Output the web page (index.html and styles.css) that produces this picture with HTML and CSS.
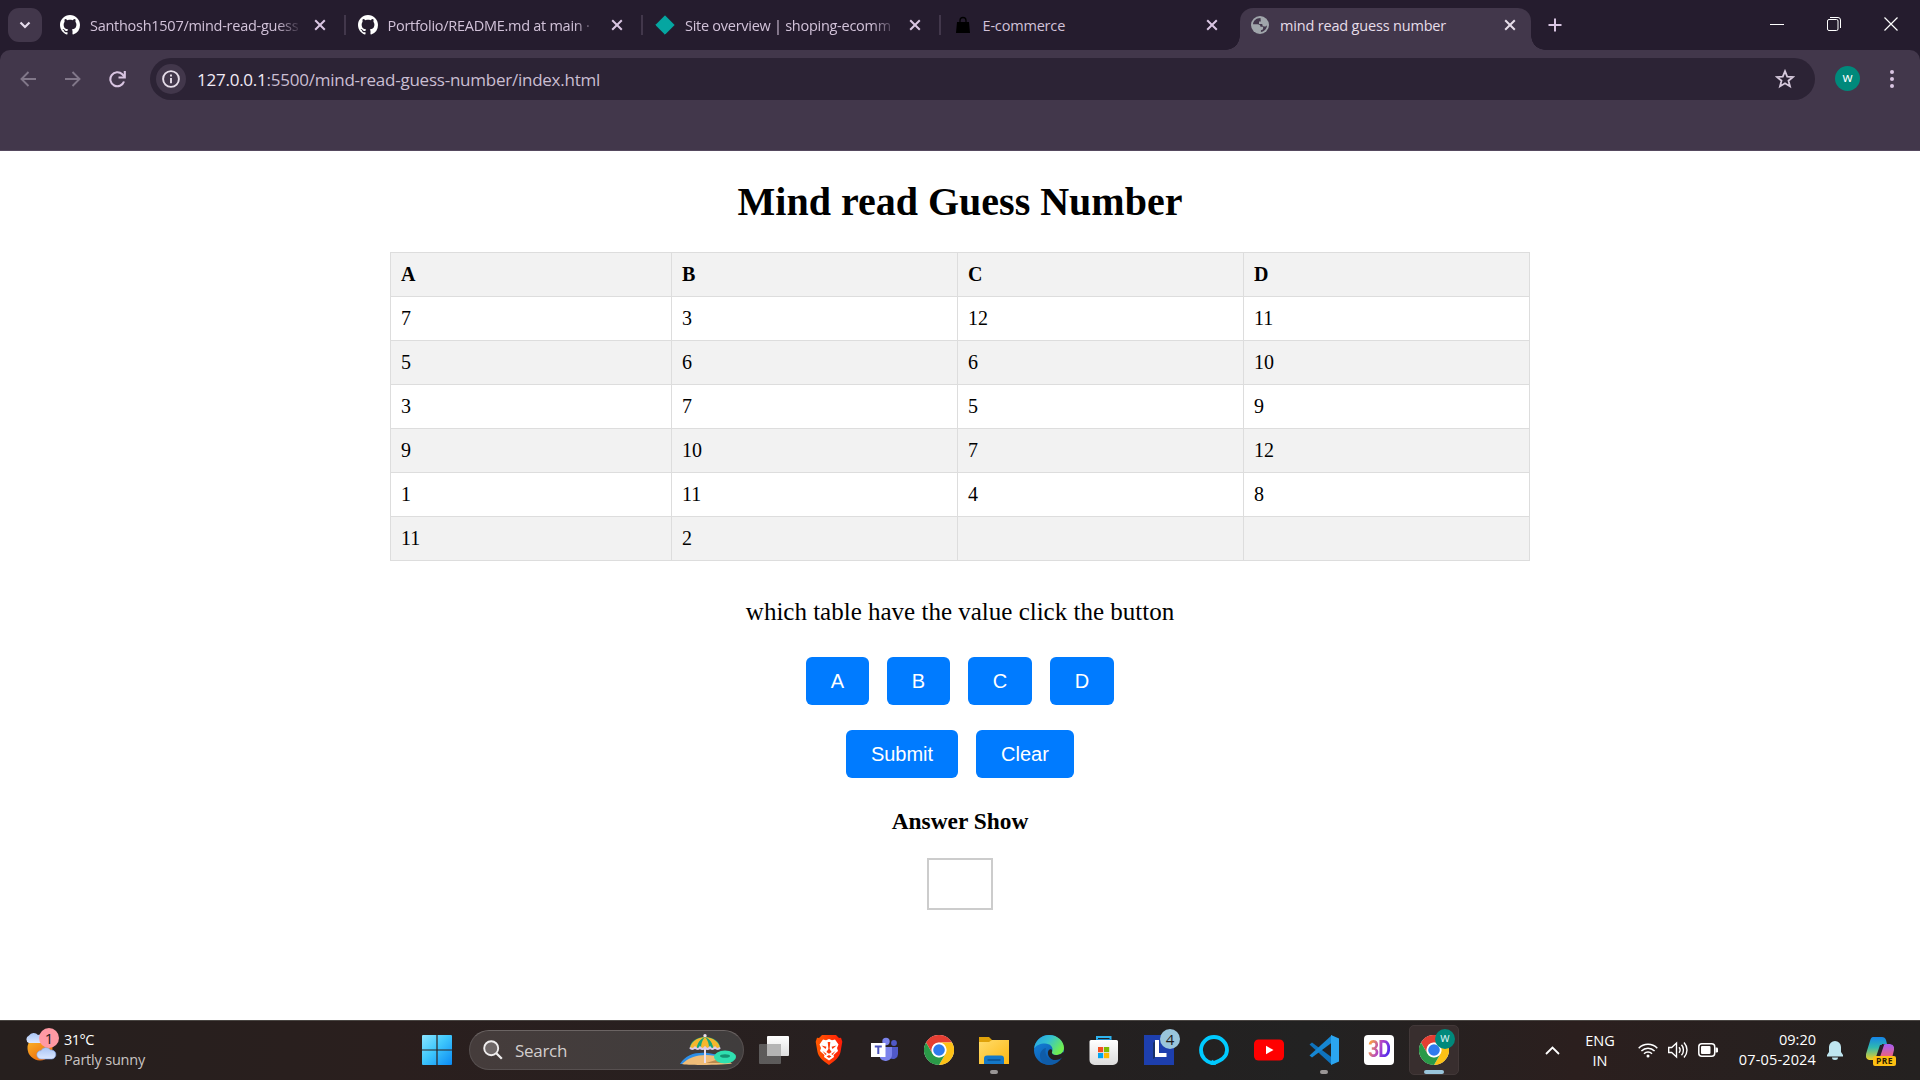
FILE: index.html
```html
<!DOCTYPE html>
<html lang="en">
<head>
<meta charset="utf-8">
<title>mind read guess number</title>
<link rel="stylesheet" href="styles.css">
</head>
<body>
<svg width="0" height="0" class="defs" aria-hidden="true">
  <defs>
    <linearGradient id="win" x1="0" y1="0" x2="1" y2="1"><stop offset="0" stop-color="#8be4ff"/><stop offset=".45" stop-color="#40c8fc"/><stop offset="1" stop-color="#0a8af4"/></linearGradient>
    <linearGradient id="sun" x1="0" y1="0" x2=".6" y2="1"><stop offset="0" stop-color="#fbc02d"/><stop offset="1" stop-color="#ef6c0c"/></linearGradient>
    <linearGradient id="cloud" x1="0" y1="0" x2="0" y2="1"><stop offset="0" stop-color="#a9c4f5"/><stop offset="1" stop-color="#dbe7ff"/></linearGradient>
    <linearGradient id="brave" x1="0" y1="0" x2="1" y2="0"><stop offset="0" stop-color="#ff5a00"/><stop offset="1" stop-color="#ff1c08"/></linearGradient>
    <linearGradient id="folder" x1="0" y1="0" x2="1" y2="1"><stop offset="0" stop-color="#ffdc6b"/><stop offset="1" stop-color="#fdb813"/></linearGradient>
    <linearGradient id="edgeTop" x1="0" y1="0" x2="1" y2=".5"><stop offset="0" stop-color="#249ee8"/><stop offset=".5" stop-color="#35c2d0"/><stop offset="1" stop-color="#70ee50"/></linearGradient>
    <linearGradient id="edgeLow" x1="0" y1="0" x2=".7" y2="1"><stop offset="0" stop-color="#1587e0"/><stop offset="1" stop-color="#0c55a8"/></linearGradient>
    <linearGradient id="store" x1="0" y1="0" x2="0" y2="1"><stop offset="0" stop-color="#fff"/><stop offset="1" stop-color="#dcdcdc"/></linearGradient>
    <linearGradient id="paper" x1="0" y1="0" x2="0" y2="1"><stop offset="0" stop-color="#fff"/><stop offset="1" stop-color="#dedede"/></linearGradient>
    <linearGradient id="copA" x1="0" y1="0" x2="0" y2="1"><stop offset="0" stop-color="#1584e8"/><stop offset=".45" stop-color="#2fb8b0"/><stop offset="1" stop-color="#f2cf20"/></linearGradient>
    <linearGradient id="copB" x1="0" y1="0" x2="0" y2="1"><stop offset="0" stop-color="#a35df5"/><stop offset="1" stop-color="#f7626f"/></linearGradient>
    <symbol id="github" viewBox="0 0 16 16"><path fill="#fff" d="M8 0C3.58 0 0 3.58 0 8c0 3.54 2.29 6.53 5.47 7.59.4.07.55-.17.55-.38 0-.19-.01-.82-.01-1.49-2.01.37-2.53-.49-2.69-.94-.09-.23-.48-.94-.82-1.13-.28-.15-.68-.52-.01-.53.63-.01 1.08.58 1.23.82.72 1.21 1.87.87 2.33.66.07-.52.28-.87.51-1.07-1.78-.2-3.64-.89-3.64-3.95 0-.87.31-1.59.82-2.15-.08-.2-.36-1.02.08-2.12 0 0 .67-.21 2.2.82.64-.18 1.32-.27 2-.27s1.36.09 2 .27c1.53-1.04 2.2-.82 2.2-.82.44 1.1.16 1.92.08 2.12.51.56.82 1.27.82 2.15 0 3.07-1.87 3.75-3.65 3.95.29.25.54.73.54 1.48 0 1.07-.01 1.93-.01 2.2 0 .21.15.46.55.38A8.01 8.01 0 0 0 16 8c0-4.42-3.58-8-8-8z"/></symbol>
    <symbol id="cross" viewBox="0 0 12 12"><path d="M1.2 1.2l9.6 9.6M10.800 1.200l-9.600 9.600" stroke="currentColor" stroke-width="2" fill="none"/></symbol>
    <symbol id="chrome" viewBox="0 0 48 48"><circle cx="24" cy="24" r="24" fill="#fff"/><path fill="#e53e32" d="M3.200 12A24 24 0 0 1 44.800 12H24a12 12 0 0 0-10.400 18z"/><path fill="#fdc116" d="M44.800 12A24 24 0 0 1 24 48l10.400-18A12 12 0 0 0 24 12z"/><path fill="#2a9a48" d="M24 48A24 24 0 0 1 3.200 12l10.400 18A12 12 0 0 0 34.400 30z"/><circle cx="24" cy="24" r="11.500" fill="#fff"/><circle cx="24" cy="24" r="9.300" fill="#2f7bee"/></symbol>
  </defs>
</svg>

<div class="window">
  <header class="tabstrip">
    <div class="tab-search"><svg width="12" height="8" viewBox="0 0 12 8"><path d="M1.500 1.500L6 6l4.500-4.500" fill="none" stroke="#e6dcec" stroke-width="2.200"/></svg></div>
    <div class="tab"><svg class="favicon" width="20" height="20"><use href="#github"/></svg><span class="title">Santhosh1507/mind-read-guess</span><svg class="close" width="12" height="12"><use href="#cross"/></svg></div>
    <div class="tab sep"><svg class="favicon" width="20" height="20"><use href="#github"/></svg><span class="title">Portfolio/README.md at main ·</span><svg class="close" width="12" height="12"><use href="#cross"/></svg></div>
    <div class="tab sep"><svg class="favicon" width="20" height="20" viewBox="0 0 20 20"><path d="M10 .8L19.200 10 10 19.200.800 10z" fill="#05a6a1" stroke="#05a6a1" stroke-width="1" stroke-linejoin="round"/></svg><span class="title">Site overview | shoping-ecomm</span><svg class="close" width="12" height="12"><use href="#cross"/></svg></div>
    <div class="tab sep"><svg class="favicon" width="20" height="20" viewBox="0 0 20 20"><path d="M4 7h12l1 11H3z" fill="#000"/><path d="M7 10V5.500a3 3 0 0 1 6 0V10" fill="none" stroke="#000" stroke-width="1.300"/></svg><span class="title plain">E-commerce</span><svg class="close" width="12" height="12"><use href="#cross"/></svg></div>
    <div class="tab active"><svg class="favicon" width="18" height="18" viewBox="0 0 18 18"><circle cx="9" cy="9" r="9" fill="#a0a6ab"/><path d="M9.500 2C5 2 2.200 5 2 8.200h4.500c2 0 3 1 3 2.600h2.600v1.800c0 1-1 1.600-2.200 1.600v1.700c3.500-.4 6-3.300 6.100-6.700-.6 1-1.600 1.500-2.800 1.300-1.500-.2-1.900-1.200-1.900-2.500H8V5.500h1.800z" fill="#42374b"/></svg><span class="title plain">mind read guess number</span><svg class="close" width="12" height="12"><use href="#cross"/></svg></div>
    <div class="new-tab"><svg width="14" height="14" viewBox="0 0 14 14"><path d="M7 .5v13M.5 7h13" stroke="#d9c5e2" stroke-width="2"/></svg></div>
    <div class="controls">
      <svg width="14" height="14" viewBox="0 0 14 14"><path d="M0 7.500h14" stroke="#fff"/></svg>
      <svg width="14" height="14" viewBox="0 0 14 14" fill="none" stroke="#fff"><rect x=".5" y="2.500" width="10.500" height="11" rx="1.500"/><path d="M3 .5h8a2.500 2.500 0 0 1 2.500 2.500v8"/></svg>
      <svg width="14" height="14" viewBox="0 0 14 14"><path d="M.5.5l13 13M13.500.5l-13 13" stroke="#fff" stroke-width="1.200"/></svg>
    </div>
  </header>

  <div class="toolbar-back"><div class="toolbar">
    <div class="nav">
      <svg width="16" height="16" viewBox="0 0 16 16" fill="none" stroke="#817789" stroke-width="1.900"><path d="M16 8H1.500M8.500 1L1.500 8l7 7"/></svg>
      <svg width="16" height="16" viewBox="0 0 16 16" fill="none" stroke="#817789" stroke-width="1.900"><path d="M0 8h14.500M7.500 1l7 7-7 7"/></svg>
      <svg width="17" height="17" viewBox="0 0 17 17" fill="none" stroke="#d9c5e2" stroke-width="2.100"><path d="M15 10.500A7 7 0 1 1 13.300 3.300L15.300 5.500"/><path d="M15.800 0v6.500H9.500"/></svg>
    </div>
    <div class="omnibox">
      <div class="info"><svg width="18" height="18" viewBox="0 0 18 18"><circle cx="9" cy="9" r="7.900" fill="none" stroke="#e6dde9" stroke-width="1.900"/><path d="M9 8v5.200M9 4.600v2" stroke="#e6dde9" stroke-width="1.900"/></svg></div>
      <div class="url"><b>127.0.0.1</b>:5500/mind-read-guess-number/index.html</div>
      <svg class="star" width="20" height="20" viewBox="0 0 20 20"><path d="M10 2.200l2.200 5.400 5.800.4-4.500 3.700 1.500 5.700L10 14.300l-5 3.100 1.500-5.700L2 8l5.800-.4z" fill="none" stroke="#d6c9dc" stroke-width="1.800"/></svg>
    </div>
    <div class="avatar">w</div>
    <svg class="dots" width="4" height="18" viewBox="0 0 4 18" fill="#d9c5e2"><circle cx="2" cy="2" r="2"/><circle cx="2" cy="9" r="2"/><circle cx="2" cy="16" r="2"/></svg>
  </div></div>

  <main class="page">
    <h1>Mind read Guess Number</h1>
    <table>
      <tr><th>A</th><th>B</th><th>C</th><th>D</th></tr>
      <tr><td>7</td><td>3</td><td>12</td><td>11</td></tr>
      <tr><td>5</td><td>6</td><td>6</td><td>10</td></tr>
      <tr><td>3</td><td>7</td><td>5</td><td>9</td></tr>
      <tr><td>9</td><td>10</td><td>7</td><td>12</td></tr>
      <tr><td>1</td><td>11</td><td>4</td><td>8</td></tr>
      <tr><td>11</td><td>2</td><td></td><td></td></tr>
    </table>
    <p class="question">which table have the value click the button</p>
    <div class="buttons letters"><button>A</button><button>B</button><button class="wide">C</button><button class="wide">D</button></div>
    <div class="buttons actions"><button class="submit">Submit</button><button class="clear">Clear</button></div>
    <h3>Answer Show</h3>
    <div class="answer"></div>
  </main>

  <footer class="taskbar">
    <div class="weather">
      <div class="weather-icon">
        <svg width="32" height="30" viewBox="0 0 32 30"><circle cx="15" cy="16" r="12.500" fill="url(#sun)"/><path d="M4 11a4 4 0 0 1 0-7.500A5.500 5.500 0 0 1 13 3a4 4 0 0 1 4 8z" fill="url(#cloud)"/><path d="M16 27a4.200 4.200 0 0 1 0-8.400 5.500 5.500 0 0 1 9.600-.6 4.500 4.500 0 0 1 1.400 9z" fill="url(#cloud)" stroke="#7f9fe0" stroke-width=".6"/></svg>
        <span class="badge pink">1</span>
      </div>
      <div class="weather-text"><span class="temp">31°C</span><span class="cond">Partly sunny</span></div>
    </div>
    <div class="apps">
      <div class="app start"><svg width="30" height="30" viewBox="0 0 30 30"><path d="M0 1a1 1 0 0 1 1-1h13.400v14.400H0zM15.600 0H29a1 1 0 0 1 1 1v13.400H15.600zM0 15.600h14.400V30H1a1 1 0 0 1-1-1zM15.600 15.600H30V29a1 1 0 0 1-1 1H15.600z" fill="url(#win)"/></svg></div>
      <div class="search">
        <svg width="20" height="20" viewBox="0 0 20 20"><circle cx="8.200" cy="8.200" r="7" fill="#6e6767" stroke="#f0eeee" stroke-width="1.900"/><path d="M13.300 13.300l5.500 5.500" stroke="#f0eeee" stroke-width="2.300"/></svg>
        <span>Search</span>
        <svg class="beach" width="56" height="32" viewBox="0 0 56 32">
          <path d="M0 30C6 20 16 18 28 19l16 3-2 8z" fill="#2d8fe8"/><path d="M2 30c6-6 14-9 24-9 12 0 20 4 26 8.500-4 1.500-46 2-50 .5z" fill="#f0bd78"/>
          <path d="M26 29l10-3h10l-4 3z" fill="#b98a50"/>
          <path d="M25 3v26" stroke="#e9dff0" stroke-width="2"/><circle cx="25" cy="1.700" r="1.700" fill="#e8e0ec"/>
          <path d="M10 14C10 7 17 3 25 3s15 4 15 11z" fill="#14a67b"/><path d="M10 14c1-6 6-10 15-11-5 3-7 6-8 11zM33 14c-1-5-3-8-8-11 9 1 14 5 15 11zM20 14c0-5 2-9 5-11 3 2 5 6 5 11z" fill="#f4b72d"/><path d="M17 14c0-4 3-9 8-11-3 3-4 7-4 11zM29 14c0-4-1-8-4-11 5 2 8 7 8 11z" fill="#14a67b"/>
          <path d="M10 13.500q2 3 5 0 3 3 5 0 2.500 3 5 0 2.500 3 5 0 2 3 5 0 3 3 5 0" fill="none" stroke="#d9ccec" stroke-width="2.200"/>
          <ellipse cx="45" cy="23" rx="11" ry="6.500" fill="#2fe0b0"/><ellipse cx="45" cy="22" rx="5" ry="1.800" fill="#149372"/>
        </svg>
      </div>
      <div class="app"><svg width="30" height="30" viewBox="0 0 30 30"><rect x="8" y="1" width="22" height="20" rx="1" fill="url(#paper)"/><rect x="0" y="9" width="22" height="20" rx="1" fill="#727272" opacity=".72"/><path d="M8 9h14v12H8z" fill="#b4b4b4"/></svg></div>
      <div class="app"><svg width="30" height="30" viewBox="0 0 30 30"><path d="M8 0h14l3 3 2-.3 1.300 4L26.500 17c-1 5-5 8.500-11.500 13C8.500 25.500 4.500 22 3.500 17L1.700 6.700 3 2.700 5 3z" fill="url(#brave)"/><path d="M9 4.500l3 .8L15 4l3 1.300 3-.8 3.500 5-1.500 3.500 1 3-4.500 4L20 22l-5 3.500L10 22l.5-2L6 16l1-3-1.500-3.500z" fill="#fff"/><path d="M7.500 10.500l5 1.300-1 2.200zM22.500 10.500l-5 1.300 1 2.200zM13.700 7h2.600l-.7 7 2 3-2.600 1.700-2.600-1.700 2-3zM8.500 16l4.200 3-1.200 1zM21.500 16l-4.200 3 1.200 1zM12.500 21.500L15 20l2.500 1.500L15 23z" fill="#fb3b0b"/></svg></div>
      <div class="app"><svg width="28" height="30" viewBox="0 0 28 30"><circle cx="24" cy="8" r="2.900" fill="#5059c9"/><circle cx="16" cy="6.500" r="3.700" fill="#7b83eb"/><path d="M18 12h10v7a5 5 0 0 1-8 4z" fill="#5059c9"/><path d="M10 12h12v8a6.500 6.500 0 0 1-12 3z" fill="#7b83eb"/><rect x="1" y="8" width="14.500" height="14" fill="#fff"/><path d="M4.800 11.500h7M8.300 11.500v7.500" stroke="#4b53bc" stroke-width="2"/></svg></div>
      <div class="app"><svg width="30" height="30"><use href="#chrome"/></svg></div>
      <div class="app run"><svg width="30" height="30" viewBox="0 0 30 30"><path d="M0 2h10l3 3v5H0z" fill="#dfa20a"/><path d="M0 7h10l3-2h17v24H0z" fill="url(#folder)"/><path d="M5 29v-5.500a3 3 0 0 1 3-3h14a3 3 0 0 1 3 3V29z" fill="#1478c8"/><path d="M8.500 25h13" stroke="#0a4d8c" stroke-width="1.400"/></svg></div>
      <div class="app"><svg width="30" height="30" viewBox="0 0 30 30"><circle cx="15" cy="15" r="15" fill="url(#edgeLow)"/><path d="M.2 13.500C1 5.500 7.500 0 15 0c9 0 15 6.500 15 13 0 5-4 7-7.500 7-3.500 0-5-1.500-4.500-3 2-5-2-8.500-7-8.500C6 8.500 2 10.500.2 13.500z" fill="url(#edgeTop)"/><path d="M12 13c-2 5.500 1.500 13 9 12 3-.4 5-1.500 7-3.200C25 27 20.500 30 15 30c-5 0-9.500-5-9-10 .3-3.500 3-6.500 6-7z" fill="#0f5ca8"/><path d="M18 17c-.5 2 1 3 4.500 3 3 0 5-1 6.500-3l1.500 1-1.700 4c-2 2-4.800 3-7.300 3-6 0-9-6-7-9.500 1.500-2 4.300-2 3.500 1.500z" fill="#242020"/></svg></div>
      <div class="app"><svg width="30" height="30" viewBox="0 0 30 30"><path d="M8 7V2h13.500v5" fill="none" stroke="#2fb4ef" stroke-width="2"/><path d="M.5 6.500a1.500 1.500 0 0 1 1.500-1.500h25.500A1.500 1.500 0 0 1 29 6.500V25a5 5 0 0 1-5 5H5.500a5 5 0 0 1-5-5z" fill="url(#store)"/><path d="M7.500 4.500h14.500" stroke="#188ccc" stroke-width="1"/><path d="M9 12h5.200v5.200H9z" fill="#f25022"/><path d="M15 12h5.200v5.200H15z" fill="#7fba00"/><path d="M9 18h5.200v5.200H9z" fill="#00a4ef"/><path d="M15 18h5.200v5.200H15z" fill="#ffb900"/></svg></div>
      <div class="app"><svg width="30" height="30" viewBox="0 0 30 30"><path d="M0 0h30v30H0z" fill="#1d3fae"/><path d="M11 6v17l-2 1V8zM11 23h12" fill="#153067"/><path d="M11 5h4v13h7.500v4H11z" fill="#fff"/></svg><span class="badge blue">4</span></div>
      <div class="app"><svg width="30" height="30" viewBox="0 0 30 30"><path d="M14 28.300C7.500 27.800 2 22 2 15A13 13 0 1 1 28 15c0 6-5 10.500-14 13.300z" fill="none" stroke="#00caff" stroke-width="3.800" stroke-linejoin="round"/><path d="M12 26l1 4 4-.1-3-5.200z" fill="#00caff"/></svg></div>
      <div class="app"><svg width="30" height="30" viewBox="0 0 30 30"><rect y="4.500" width="30" height="21" rx="4.500" fill="#f00"/><path d="M12 10.700v8.600l7.500-4.300z" fill="#fff"/></svg></div>
      <div class="app run"><svg width="30" height="30" viewBox="0 0 30 30"><path d="M.5 9.500L3 7.500l20 15V30z" fill="#0f73bd"/><path d="M.5 20.500L3 22.500l20-15V0z" fill="#1687d3"/><path d="M22 0l8 3.500v23L22 30V0z" fill="#2ba5f0"/></svg></div>
      <div class="app"><div class="three-d"><span>3D</span></div></div>
      <div class="app current"><svg width="30" height="30"><use href="#chrome"/></svg><span class="badge green">w</span></div>
    </div>
    <div class="tray">
      <svg class="up" width="15" height="9" viewBox="0 0 15 9"><path d="M1 8l6.500-6.500L14 8" fill="none" stroke="#fff" stroke-width="1.800"/></svg>
      <div class="lang"><span>ENG</span><span>IN</span></div>
      <div class="status">
        <svg width="20" height="16" viewBox="0 0 20 16" fill="none" stroke="#fff" stroke-width="1.500"><path d="M.7 6.200a13 13 0 0 1 18.600 0M3.400 9a9.300 9.300 0 0 1 13.200 0M6 11.700a5.700 5.700 0 0 1 8 0"/><circle cx="10" cy="14" r="1.500" fill="#fff" stroke="none"/></svg>
        <svg width="20" height="18" viewBox="0 0 20 18" fill="none" stroke="#fff" stroke-width="1.400"><path d="M.7 6.500h3L8.500 2v14l-4.800-4.500h-3z"/><path d="M11 6.200c1.300 1.600 1.300 4 0 5.600M13.500 3.800c2.600 3 2.600 7.400 0 10.400M16 1.500c4 4.500 4 10.500 0 15"/></svg>
        <svg width="20" height="14" viewBox="0 0 20 14"><rect x=".8" y=".8" width="15.900" height="12.400" rx="3" fill="none" stroke="#fff" stroke-width="1.500"/><rect x="3" y="3" width="9.500" height="8" rx="1" fill="#fff"/><path d="M17.500 4.500h1.200q1.300 0 1.300 1.300v2.400q0 1.300-1.300 1.300h-1.200z" fill="#fff"/></svg>
      </div>
      <div class="clock"><span class="time">09:20</span><span class="date">07-05-2024</span></div>
      <svg class="bell" width="16" height="19" viewBox="0 0 16 19" fill="#bfe6f0"><path d="M8 0a6 6 0 0 1 6 6v5l2 3v1.500H0V14l2-3V6a6 6 0 0 1 6-6zM5 16.500h6a3 2.500 0 0 1-6 0z"/></svg>
      <div class="copilot"><svg width="28" height="24" viewBox="0 0 28 24"><path d="M7 0h9q3 0 4 3l1 4h-5l-5 13q-1 3-4 3H3q-4-1-3-6L4 4q1-4 3-4z" fill="url(#copA)"/><path d="M20 7h4q5 1 4 6l-2 8H12l4-11q1-3 4-3z" fill="url(#copB)"/><path d="M14 8h4l-4 12h-4z" fill="#26202a"/></svg><span>PRE</span></div>
    </div>
  </footer>
</div>
</body>
</html>
```

FILE: styles.css
```css
* { box-sizing: border-box; }
body { margin: 0; overflow: hidden; background: #fff; }
svg { display: block; flex: none; }
.defs { position: absolute; }
.window { width: 1920px; height: 1080px; display: flex; flex-direction: column; font-family: "Open Sans", "Noto Sans", sans-serif; }

/* Tab strip */
.tabstrip { height: 50px; flex: none; display: flex; align-items: flex-start; padding: 8px 0 0 8px; background: #251c2e; color: #d2c2d9; }
.tab-search { width: 34px; height: 34px; margin-right: 4px; border-radius: 11px; background: #42374b; display: grid; place-items: center; }
.tab { width: 297.500px; height: 42px; padding: 0 14px 8px 14px; display: flex; align-items: center; }
.tab .favicon { margin-right: 10px; }
.tab .title { flex: 1; white-space: nowrap; font-size: 14.500px; line-height: 24px; padding-top: 2px; letter-spacing: -0.270px; margin-right: 12px; -webkit-mask-image: linear-gradient(90deg, #000 88%, transparent); mask-image: linear-gradient(90deg, #000 88%, transparent); }
.tab .title.plain { -webkit-mask-image: none; mask-image: none; letter-spacing: -0.180px; }
.sep { background: linear-gradient(#42374b, #42374b) -1px 7px / 3px 20px no-repeat; }
.tab .close { margin-right: 4px; color: #d9c5e2; }
.tab.active { position: relative; width: 291px; margin-left: 4px; padding: 0 11px 8px 11px; border-radius: 13px 13px 0 0; background: #42374b; color: #e6dde9; }
.tab.active .favicon { margin-right: 11px; }
.tab.active .close { color: #e6dde9; }
.tab.active::before, .tab.active::after { content: ""; position: absolute; bottom: 0; width: 14px; height: 14px; }
.tab.active::before { left: -14px; background: radial-gradient(circle at 0 0, transparent 13.500px, #42374b 14px); }
.tab.active::after { right: -14px; background: radial-gradient(circle at 100% 0, transparent 13.500px, #42374b 14px); }
.new-tab { padding: 10px 0 0 17px; }
.controls { display: flex; gap: 43px; margin: 9px 22px 0 auto; }

/* Toolbar */
.toolbar-back { flex: none; height: 101px; background: linear-gradient(#251c2e 14px, #42374b 14px); }
.toolbar { height: 101px; padding-top: 8px; display: flex; align-items: flex-start; background: #42374b; border-radius: 10px 10px 0 0; border-bottom: 1px solid #55495e; }
.nav { width: 150px; height: 42px; padding-left: 20px; display: flex; align-items: center; gap: 28.500px; }
.omnibox { width: 1665px; height: 42px; padding: 0 20px 0 6px; border-radius: 21px; background: #2c2335; display: flex; align-items: center; }
.info { width: 30px; height: 30px; border-radius: 50%; background: #42374b; display: grid; place-items: center; margin-right: 11px; }
.url { flex: 1; font-size: 17px; line-height: 26px; padding-top: 1px; letter-spacing: -0.240px; color: #cabed2; }
.url b { font-weight: 400; color: #f2ebf5; }
.avatar { width: 25px; height: 25px; margin: 8px 0 0 20px; border-radius: 50%; background: #00897b; color: #fff; font-size: 13px; line-height: 23px; text-align: center; }
.dots { margin: 12px 0 0 30px; }

/* Page */
.page { flex: 1; display: flex; flex-direction: column; align-items: center; background: #fff; color: #000; font-family: "Liberation Serif", serif; }
h1 { margin: 28px 0 0; font-size: 40px; line-height: 46px; white-space: nowrap; }
table { width: 1140px; margin-top: 27px; border-collapse: collapse; table-layout: fixed; font-size: 20px; }
th, td { height: 44px; border: 1px solid #ddd; padding: 0 10px; text-align: left; line-height: 23px; }
tr:nth-child(odd) { background: #f2f2f2; }
th:first-child { width: 281px; }
.question { margin: 36px 0 0; font-size: 25px; line-height: 30px; white-space: nowrap; }
.buttons { display: flex; gap: 18px; }
.letters { margin-top: 30px; }
.actions { margin-top: 25px; }
button { width: 63px; height: 48px; padding: 0; border: 0; border-radius: 6px; background: #007bff; color: #fff; font: 20px "Liberation Sans", sans-serif; }
button.wide { width: 64px; }
button.submit { width: 112px; }
button.clear { width: 98px; }
h3 { margin: 29px 0 0; font-size: 23.400px; line-height: 28px; white-space: nowrap; }
.answer { width: 66px; height: 52px; margin-top: 23px; border: 2px solid #ccc; }

/* Taskbar */
.taskbar { position: relative; height: 60px; flex: none; display: flex; border-top: 1px solid #494542; background: linear-gradient(90deg, #261f1e, #2a1f1e 20%, #272020 45%, #242020 57%, #222 68%, #2b1f1e 82%, #242120); color: #fff; }
.weather { width: 412px; padding-left: 25px; display: flex; gap: 7px; }
.weather-icon { position: relative; width: 32px; padding-top: 11px; }
.weather-text { display: flex; flex-direction: column; padding-top: 9px; font-size: 14.500px; line-height: 20px; letter-spacing: -0.200px; }
.cond { color: #c9c4c3; }
.temp { letter-spacing: -0.500px; }
.badge { position: absolute; width: 20px; height: 20px; border-radius: 50%; text-align: center; color: #1e1a1a; font-size: 15px; line-height: 20px; }
.pink { left: 14px; top: 7px; background: #ff99a4; }
.blue { right: 4px; top: 4px; background: #99c5db; }
.green { right: 3px; top: 3px; background: #00897b; color: #d5eeee; font-size: 12px; line-height: 18px; }
.apps { display: flex; gap: 5px; padding-top: 4px; }
.app { position: relative; width: 50px; height: 50px; display: grid; place-items: center; border-radius: 5px; }
.start { margin-right: 2px; }
.search { width: 275px; height: 40px; margin-top: 5px; padding-left: 13px; display: flex; align-items: center; gap: 12px; border: 1px solid #575050; border-top-color: #6b6463; border-radius: 20px; background: linear-gradient(90deg, #453c3b, #403d3d); color: #d3cecd; font-size: 17px; letter-spacing: -0.300px; }
.beach { margin-left: auto; margin-right: 7px; }
.run::after, .current::after { content: ""; position: absolute; bottom: 1px; left: 21px; width: 8px; height: 4px; border-radius: 2px; background: #9a9696; }
.current { background: #382e2e; border: 1px solid #423838; }
.current::after { bottom: 0; left: 14px; width: 20px; background: #99c5db; }
.three-d { width: 30px; height: 30px; border-radius: 4px; background: #fff; display: grid; place-items: center; }
.three-d span { font: 700 23px/28px "Roboto", sans-serif; letter-spacing: -1px; transform: scaleX(.85); background: linear-gradient(115deg, #f79b45 15%, #b043c9 50%, #4a2bf0 85%); -webkit-background-clip: text; background-clip: text; color: transparent; }
.tray { margin-left: auto; display: flex; align-items: flex-start; padding-right: 25px; }
.up { margin: 25px 24px 0 0; }
.lang { width: 32px; margin: 10px 22px 0 0; display: flex; flex-direction: column; align-items: center; font-size: 14.500px; line-height: 20px; }
.status { display: flex; align-items: center; gap: 10px; height: 58px; margin-right: 20px; }
.clock { width: 78px; margin: 9px 11px 0 0; display: flex; flex-direction: column; align-items: flex-end; font-size: 14.500px; line-height: 20px; white-space: nowrap; }
.date { letter-spacing: .15px; }
.bell { margin: 20px 23px 0 0; }
.copilot { position: relative; width: 29px; margin-top: 16px; }
.copilot span { position: absolute; left: 7px; top: 19px; width: 23px; height: 10px; border-radius: 2px; background: #fdbf12; color: #2b1c00; font: 700 8.500px/10px "Open Sans", sans-serif; letter-spacing: .5px; text-align: center; }
```
